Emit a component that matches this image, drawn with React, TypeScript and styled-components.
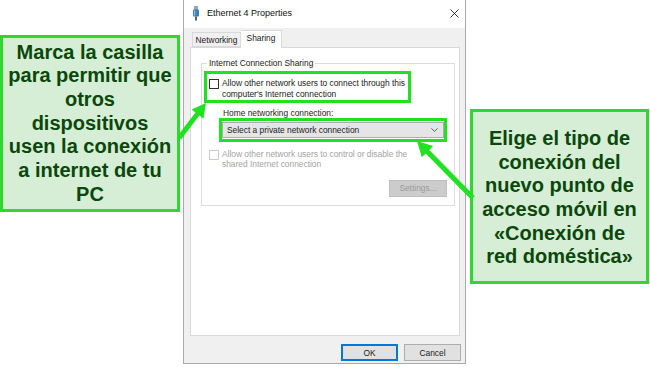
import React from 'react'
import styled, { createGlobalStyle } from 'styled-components'

const GlobalStyle = createGlobalStyle`
  html, body {
    margin: 0;
    padding: 0;
    background: #ffffff;
  }
  body {
    font-family: 'Liberation Sans', Arial, sans-serif;
  }
`

const GREEN = '#22e022'

const Page = styled.div`
  position: relative;
  width: 650px;
  height: 367px;
  overflow: hidden;
  display: flex;
  align-items: flex-start;
  background: #fff;
`

const Callout = styled.div<{ $top: number; $width: number; $height: number; $gap: number; $nudge?: number }>`
  box-sizing: border-box;
  margin-top: ${(p) => p.$top}px;
  margin-left: ${(p) => p.$gap}px;
  width: ${(p) => p.$width}px;
  height: ${(p) => p.$height}px;
  padding-top: ${(p) => p.$nudge ?? 0}px;
  flex-shrink: 0;
  display: flex;
  align-items: center;
  justify-content: center;
  background: #d5eed5;
  border: 3px solid #2fd82f;
  color: #0a470a;
  font-family: 'Liberation Sans', Arial, sans-serif;
  font-weight: 700;
  font-size: 20px;
  line-height: 23.7px;
  text-align: center;
`

const Dialog = styled.div`
  box-sizing: border-box;
  margin-left: 3px;
  width: 283px;
  height: 364px;
  flex-shrink: 0;
  display: flex;
  flex-direction: column;
  background: #f0f0f0;
  border: 1px solid #a9a9a9;
  border-top: none;
  color: #1a1a1a;
  font-size: 8.4px;
`

const TitleBar = styled.div`
  height: 26px;
  display: flex;
  align-items: center;
  padding: 0 6px 2px 8px;
  background: #fff;
  font-size: 9px;
  color: #111;
`

const TitleText = styled.span`
  margin-left: 7px;
  flex: 1;
`

const Body = styled.div`
  flex: 1;
  display: flex;
  flex-direction: column;
  padding: 2px 4px 0 6px;
`

const TabRow = styled.div`
  display: flex;
  align-items: flex-end;
  padding-left: 2px;
  height: 17px;
  position: relative;
  z-index: 1;
`

const Tab = styled.div<{ $active?: boolean; $width: number }>`
  box-sizing: border-box;
  width: ${(p) => p.$width}px;
  height: ${(p) => (p.$active ? 18 : 15)}px;
  margin-bottom: ${(p) => (p.$active ? -1 : 0)}px;
  display: flex;
  align-items: center;
  justify-content: center;
  padding-bottom: ${(p) => (p.$active ? 3 : 0)}px;
  background: ${(p) => (p.$active ? '#fff' : '#f0f0f0')};
  border: 1px solid #d9d9d9;
  border-bottom: ${(p) => (p.$active ? 'none' : '1px solid #d9d9d9')};
  border-left: ${(p) => (p.$active ? 'none' : '1px solid #d9d9d9')};
`

const Panel = styled.div`
  box-sizing: border-box;
  width: 270px;
  height: 289px;
  background: #fff;
  border: 1px solid #d9d9d9;
  padding: 10px 8px 0 10px;
`

const GroupBox = styled.fieldset`
  margin: 0;
  padding: 0 7px 8px 1px;
  border: 1px solid #dcdcdc;
  display: flex;
  flex-direction: column;
`

const Legend = styled.legend`
  margin-left: 4px;
  padding: 0 2px;
  line-height: 10px;
  font-size: 8.4px;
`

const Highlight = styled.div<{ $width: number; $left: number; $top: number }>`
  box-sizing: border-box;
  width: ${(p) => p.$width}px;
  margin-left: ${(p) => p.$left}px;
  margin-top: ${(p) => p.$top}px;
  border: 3px solid ${GREEN};
`

const CheckRow = styled.div<{ $disabled?: boolean }>`
  display: flex;
  align-items: flex-start;
  padding: ${(p) => (p.$disabled ? '0' : '4px 2px 1px')};
  margin-left: ${(p) => (p.$disabled ? 6 : 0)}px;
  margin-top: ${(p) => (p.$disabled ? 7 : 0)}px;
  color: ${(p) => (p.$disabled ? '#a3a3a3' : '#1a1a1a')};
  line-height: 10.5px;
`

const Box = styled.span<{ $disabled?: boolean }>`
  box-sizing: border-box;
  width: 10px;
  height: 10px;
  margin-top: 1px;
  margin-right: 3px;
  flex-shrink: 0;
  background: #fff;
  border: 1px solid ${(p) => (p.$disabled ? '#cccccc' : '#333333')};
`

const Label = styled.div`
  margin: 5.5px 0 0 20px;
  line-height: 9px;
`

const Combo = styled.div`
  box-sizing: border-box;
  height: 16px;
  margin: 1px 0;
  display: flex;
  align-items: center;
  justify-content: space-between;
  padding: 0 5px 0 4px;
  background: #e5e5e5;
  border: 1px solid #adadad;
`

const ButtonRow = styled.div<{ $pad: string }>`
  display: flex;
  justify-content: flex-end;
  gap: 6px;
  padding: ${(p) => p.$pad};
`

const Button = styled.div<{ $variant?: 'default' | 'primary' | 'disabled'; $width: number }>`
  box-sizing: border-box;
  width: ${(p) => p.$width}px;
  height: 17px;
  display: flex;
  align-items: center;
  justify-content: center;
  background: ${(p) => (p.$variant === 'disabled' ? '#cccccc' : '#e1e1e1')};
  color: ${(p) => (p.$variant === 'disabled' ? '#9b9b9b' : '#1a1a1a')};
  border: ${(p) =>
    p.$variant === 'primary'
      ? '2px solid #0078d7'
      : p.$variant === 'disabled'
        ? '1px solid #bfbfbf'
        : '1px solid #adadad'};
`

const Overlay = styled.svg`
  position: absolute;
  left: 0;
  top: 0;
  pointer-events: none;
`

type Pt = [number, number]

function arrowPoints(tail: Pt, tip: Pt, shaft: number, headLen: number, headWidth: number): string {
  const dx = tip[0] - tail[0]
  const dy = tip[1] - tail[1]
  const len = Math.hypot(dx, dy)
  const ux = dx / len
  const uy = dy / len
  const nx = -uy
  const ny = ux
  const bx = tip[0] - ux * headLen
  const by = tip[1] - uy * headLen
  const pts: Pt[] = [
    [tail[0] + nx * shaft / 2, tail[1] + ny * shaft / 2],
    [bx + nx * shaft / 2, by + ny * shaft / 2],
    [bx + nx * headWidth / 2, by + ny * headWidth / 2],
    tip,
    [bx - nx * headWidth / 2, by - ny * headWidth / 2],
    [bx - nx * shaft / 2, by - ny * shaft / 2],
    [tail[0] - nx * shaft / 2, tail[1] - ny * shaft / 2],
  ]
  return pts.map((p) => `${p[0].toFixed(1)},${p[1].toFixed(1)}`).join(' ')
}

function EthernetIcon() {
  return (
    <svg width='8' height='15' viewBox='0 0 8 15'>
      <rect x='2' y='0' width='4' height='4' fill='#9aa4ad' />
      <rect x='1' y='3.5' width='6' height='7' rx='1' fill='#3c7fc0' />
      <rect x='2' y='4.5' width='1.2' height='5' fill='#8fc2ee' />
      <rect x='3' y='10.5' width='2' height='4' fill='#556270' />
    </svg>
  )
}

function CloseIcon() {
  return (
    <svg width='9' height='9' viewBox='0 0 9 9'>
      <path d='M0.5 0.5 L8.5 8.5 M8.5 0.5 L0.5 8.5' stroke='#222' strokeWidth='0.9' />
    </svg>
  )
}

function Chevron() {
  return (
    <svg width='7' height='4' viewBox='0 0 7 4'>
      <path d='M0.4 0.4 L3.5 3.4 L6.6 0.4' stroke='#555' strokeWidth='0.9' fill='none' />
    </svg>
  )
}

export default function App() {
  return (
    <>
      <GlobalStyle />
      <Page>
        <Callout $top={35} $width={180} $height={177} $gap={0}>
          <div>
            Marca la casilla
            <br />
            para permitir que
            <br />
            otros
            <br />
            dispositivos
            <br />
            usen la conexión
            <br />
            a internet de tu
            <br />
            PC
          </div>
        </Callout>

        <Dialog>
          <TitleBar>
            <EthernetIcon />
            <TitleText>Ethernet 4 Properties</TitleText>
            <CloseIcon />
          </TitleBar>
          <Body>
            <TabRow>
              <Tab $width={49}>Networking</Tab>
              <Tab $width={41} $active>
                Sharing
              </Tab>
            </TabRow>
            <Panel>
              <GroupBox>
                <Legend>Internet Connection Sharing</Legend>
                <Highlight $width={207} $left={1} $top={3}>
                  <CheckRow>
                    <Box />
                    <div>
                      Allow other network users to connect through this
                      <br />
                      computer's Internet connection
                    </div>
                  </CheckRow>
                </Highlight>
                <Label>Home networking connection:</Label>
                <Highlight $width={228} $left={16} $top={0}>
                  <Combo>
                    <span>Select a private network connection</span>
                    <Chevron />
                  </Combo>
                </Highlight>
                <CheckRow $disabled>
                  <Box $disabled />
                  <div>
                    Allow other network users to control or disable the
                    <br />
                    shared Internet connection
                  </div>
                </CheckRow>
                <ButtonRow $pad='10px 0 0 0'>
                  <Button $variant='disabled' $width={58}>
                    Settings...
                  </Button>
                </ButtonRow>
              </GroupBox>
            </Panel>
            <ButtonRow $pad='8px 0 0 0'>
              <Button $variant='primary' $width={57}>
                OK
              </Button>
              <Button $width={57}>Cancel</Button>
            </ButtonRow>
          </Body>
        </Dialog>

        <Callout $top={109} $width={179} $height={175} $gap={4} $nudge={3}>
          <div>
            Elige el tipo de
            <br />
            conexión del
            <br />
            nuevo punto de
            <br />
            acceso móvil en
            <br />
            «Conexión de
            <br />
            red doméstica»
          </div>
        </Callout>

        <Overlay width='650' height='367' viewBox='0 0 650 367'>
          <polygon points={arrowPoints([179, 138], [206, 103], 5, 14, 15)} fill={GREEN} />
          <polygon points={arrowPoints([473, 198], [417, 141], 5, 15, 16)} fill={GREEN} />
        </Overlay>
      </Page>
    </>
  )
}
